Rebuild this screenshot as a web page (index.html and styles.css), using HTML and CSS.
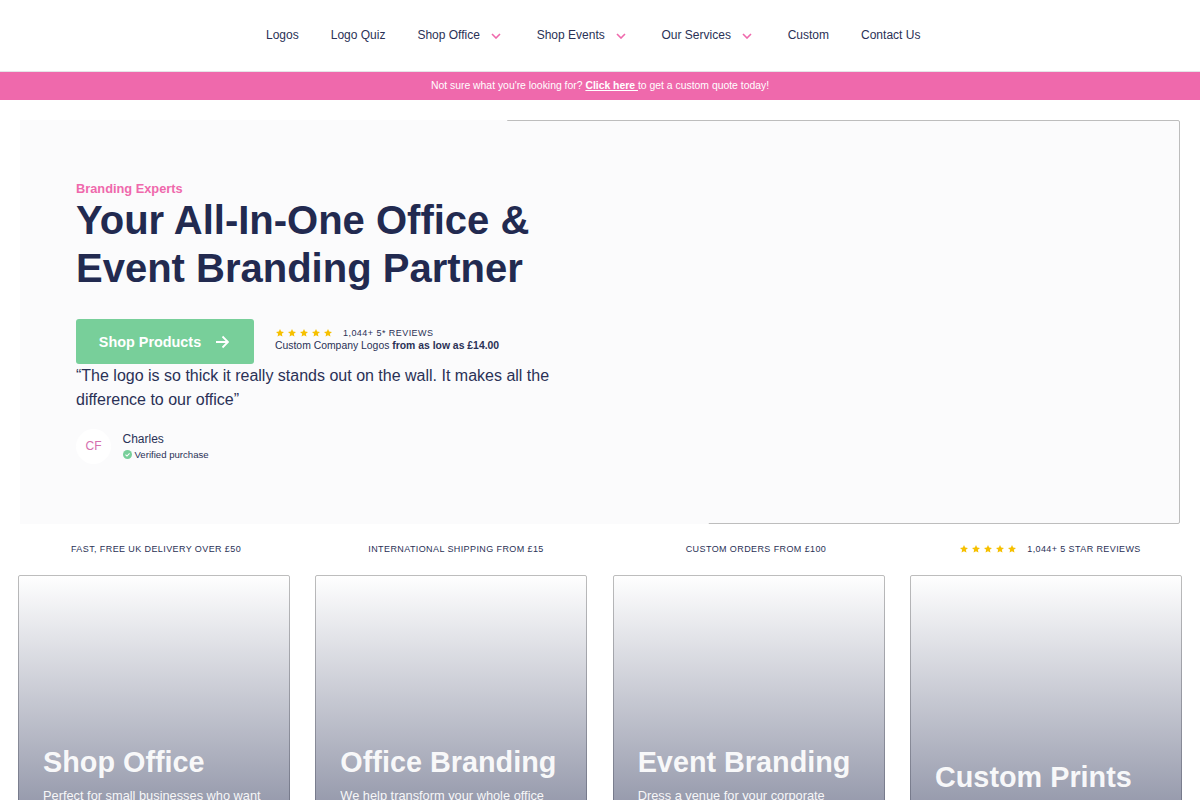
FILE: index.html
```html
<!DOCTYPE html>
<html lang="en">
<head>
    <meta charset="UTF-8">
    <meta name="viewport" content="width=device-width, initial-scale=1.0">
    <title>Office &amp; Event Branding</title>
    <link rel="stylesheet" href="styles.css">
</head>
<body>
    <nav class="main-nav">
        <a class="nav-link" href="#">Logos</a>
        <a class="nav-link" href="#">Logo Quiz</a>
        <a class="nav-link" href="#">Shop Office
            <svg class="chevron" viewBox="0 0 10 6"><path d="M1 1l4 4 4-4"/></svg>
        </a>
        <a class="nav-link" href="#">Shop Events
            <svg class="chevron" viewBox="0 0 10 6"><path d="M1 1l4 4 4-4"/></svg>
        </a>
        <a class="nav-link" href="#">Our Services
            <svg class="chevron" viewBox="0 0 10 6"><path d="M1 1l4 4 4-4"/></svg>
        </a>
        <a class="nav-link" href="#">Custom</a>
        <a class="nav-link" href="#">Contact Us</a>
    </nav>

    <div class="promo-bar">
        Not sure what you're looking for? <a href="#">Click here </a>to get a custom quote today!
    </div>

    <section class="hero">
        <div class="hero-image"></div>
        <div class="hero-copy">
            <p class="eyebrow">Branding Experts</p>
            <h1>Your All-In-One Office &amp; Event Branding Partner</h1>
            <div class="cta-row">
                <a class="cta-btn" href="#">Shop Products
                    <svg class="cta-arrow" viewBox="0 0 14 14"><path d="M1 7h12M7.500 1.500L13 7l-5.500 5.500"/></svg>
                </a>
                <div class="cta-info">
                    <div class="rating">
                        <svg class="stars" viewBox="0 0 58 10"><path d="M5 1l1.150 2.600 2.850.3-2.150 1.900.6 2.800L5 7.150 2.550 8.600l.6-2.800L1 3.900l2.850-.3zM17 1l1.150 2.600 2.850.3-2.150 1.900.6 2.800L17 7.150 14.550 8.600l.6-2.800L13 3.900l2.850-.3zM29 1l1.150 2.600 2.850.3-2.150 1.900.6 2.800L29 7.150 26.550 8.600l.6-2.800L25 3.900l2.850-.3zM41 1l1.150 2.600 2.850.3-2.150 1.900.6 2.800L41 7.150 38.550 8.600l.6-2.800L37 3.900l2.850-.3zM53 1l1.150 2.600 2.850.3-2.150 1.900.6 2.800L53 7.150 50.550 8.600l.6-2.800L49 3.900l2.850-.3z"/></svg>
                        <span>1,044+ 5* Reviews</span>
                    </div>
                    <p class="price-note">Custom Company Logos <b>from as low as £14.00</b></p>
                </div>
            </div>
            <p class="quote">“The logo is so thick it really stands out on the wall. It makes all the difference to our office”</p>
            <div class="reviewer">
                <div class="avatar">CF</div>
                <div>
                    <div class="reviewer-name">Charles</div>
                    <div class="verified">
                        <svg class="check" viewBox="0 0 10 10"><circle cx="5" cy="5" r="5"/><path d="M2.800 5.200l1.600 1.500 2.900-3"/></svg>
                        Verified purchase
                    </div>
                </div>
            </div>
        </div>
    </section>

    <div class="trust-bar">
        <div class="trust-item">Fast, free UK delivery over £50</div>
        <div class="trust-item">International shipping from £15</div>
        <div class="trust-item">Custom orders from £100</div>
        <div class="trust-item">
            <svg class="stars" viewBox="0 0 58 10"><path d="M5 1l1.150 2.600 2.850.3-2.150 1.900.6 2.800L5 7.150 2.550 8.600l.6-2.800L1 3.900l2.850-.3zM17 1l1.150 2.600 2.850.3-2.150 1.900.6 2.800L17 7.150 14.550 8.600l.6-2.800L13 3.900l2.850-.3zM29 1l1.150 2.600 2.850.3-2.150 1.900.6 2.800L29 7.150 26.550 8.600l.6-2.800L25 3.900l2.850-.3zM41 1l1.150 2.600 2.850.3-2.150 1.900.6 2.800L41 7.150 38.550 8.600l.6-2.800L37 3.900l2.850-.3zM53 1l1.150 2.600 2.850.3-2.150 1.900.6 2.800L53 7.150 50.550 8.600l.6-2.800L49 3.900l2.850-.3z"/></svg>
            <span>1,044+ 5 star reviews</span>
        </div>
    </div>

    <section class="cards">
        <a class="card" href="#">
            <div class="card-text">
                <h2>Shop Office</h2>
                <p>Perfect for small businesses who want their office to look the part with a ready-made range.</p>
            </div>
        </a>
        <a class="card" href="#">
            <div class="card-text">
                <h2>Office Branding</h2>
                <p>We help transform your whole office with logos, wall art and window graphics.</p>
            </div>
        </a>
        <a class="card" href="#">
            <div class="card-text">
                <h2>Event Branding</h2>
                <p>Dress a venue for your corporate event with banners, signs and stands made to order.</p>
            </div>
        </a>
        <a class="card" href="#">
            <div class="card-text">
                <h2>Custom Prints</h2>
                <p>Print your own artwork on any size or material you need.</p>
            </div>
        </a>
    </section>
</body>
</html>
```

FILE: styles.css
```css
:root {
    --navy: #222a50;
    --text: #2a3156;
    --pink: #ef69ac;
    --green: #78cf9a;
    --star: #f6c000;
    --panel: #fbfbfc;
}

* {
    box-sizing: border-box;
}

body {
    margin: 0;
    font-family: "Liberation Sans", Arial, sans-serif;
    color: var(--text);
    background: white;
}

a {
    color: inherit;
    text-decoration: none;
}

p, h1, h2 {
    margin: 0;
}

/* top nav */
.main-nav {
    height: 72px;
    display: flex;
    align-items: center;
    gap: 32px;
    padding: 0 0 2px 266px;
    border-bottom: 1px solid #e4e4e8;
    font-size: 12px;
}

.nav-link {
    display: flex;
    align-items: center;
}

.chevron {
    width: 10px;
    height: 6px;
    margin: 2px 3.800px 0 11px;
    fill: none;
    stroke: var(--pink);
    stroke-width: 1.600;
}

.promo-bar {
    height: 28px;
    line-height: 27px;
    text-align: center;
    background: var(--pink);
    color: white;
    font-size: 10.400px;
}

.promo-bar a {
    font-weight: bold;
    text-decoration: underline;
}

/* hero */
.hero {
    position: relative;
    margin: 20px 20px 0;
    height: 404px;
}

.hero-image {
    position: absolute;
    inset: 0;
    border: 1px solid #bdbdbd;
    border-radius: 2px;
    background: var(--panel);
}

.hero-copy {
    position: relative;
    height: 100%;
    padding: 61px 0 0 56px;
    background: var(--panel);
    clip-path: polygon(0 0, 487px 0, 689px 100%, 0 100%);
}

.eyebrow {
    color: var(--pink);
    font-size: 12.800px;
    font-weight: bold;
    line-height: 15px;
}

h1 {
    width: 480px;
    color: var(--navy);
    font-size: 40px;
    line-height: 48px;
    margin-bottom: 27px;
}

.cta-row {
    display: flex;
    align-items: center;
    gap: 21px;
}

.cta-btn {
    width: 178px;
    height: 45px;
    display: flex;
    align-items: center;
    justify-content: center;
    gap: 14px;
    padding-right: 2px;
    border-radius: 3px;
    background: var(--green);
    color: white;
    font-size: 14.400px;
    font-weight: bold;
}

.cta-arrow {
    width: 14px;
    height: 14px;
    fill: none;
    stroke: white;
    stroke-width: 1.800;
}

.cta-info {
    margin-bottom: 4px;
}

.rating {
    display: flex;
    align-items: center;
    gap: 10px;
    margin-bottom: 1px;
    font-size: 9px;
    letter-spacing: .45px;
    text-transform: uppercase;
}

.stars {
    width: 58px;
    height: 10px;
    fill: var(--star);
}

.price-note {
    font-size: 10.400px;
    line-height: 13px;
}

.quote {
    width: 490px;
    font-size: 16px;
    line-height: 24px;
}

.reviewer {
    display: flex;
    align-items: center;
    gap: 11.500px;
    margin-top: 17px;
}

.avatar {
    width: 35px;
    height: 35px;
    line-height: 35px;
    border-radius: 50%;
    background: white;
    text-align: center;
    color: #d56fae;
    font-size: 12px;
}

.reviewer-name {
    font-size: 12px;
    line-height: 16px;
}

.verified {
    display: flex;
    align-items: center;
    gap: 3px;
    font-size: 9.600px;
    line-height: 15px;
}

.check {
    width: 9px;
    height: 9px;
    fill: var(--green);
}

.check path {
    fill: none;
    stroke: white;
    stroke-width: 1.200;
}

/* trust strip */
.trust-bar {
    display: grid;
    grid-template-columns: 300px 300px 300px 288px;
    padding: 0 0 2px 6px;
    height: 51px;
    align-items: center;
}

.trust-item {
    display: flex;
    justify-content: center;
    align-items: center;
    gap: 10px;
    font-size: 9px;
    letter-spacing: .4px;
    text-transform: uppercase;
}

/* category cards */
.cards {
    display: grid;
    grid-template-columns: repeat(4, 1fr);
    gap: 25.330px;
    padding: 0 18px;
}

.card {
    position: relative;
    height: 340px;
    display: flex;
    flex-direction: column;
    justify-content: flex-end;
    border: 1px solid #bdbdbd;
    border-radius: 2px;
}

.card::after {
    content: "";
    position: absolute;
    inset: -1px;
    border-radius: 2px;
    background: linear-gradient(rgba(34, 42, 80, 0), rgba(34, 42, 80, .7));
}

.card-text {
    position: relative;
    z-index: 1;
    padding: 0 26px 80px 24px;
    color: white;
}

.card h2 {
    font-size: 28.800px;
    line-height: 34px;
    margin-bottom: 9px;
    opacity: .92;
}

.card p {
    font-size: 12.800px;
    line-height: 15.360px;
    opacity: .92;
}
```
